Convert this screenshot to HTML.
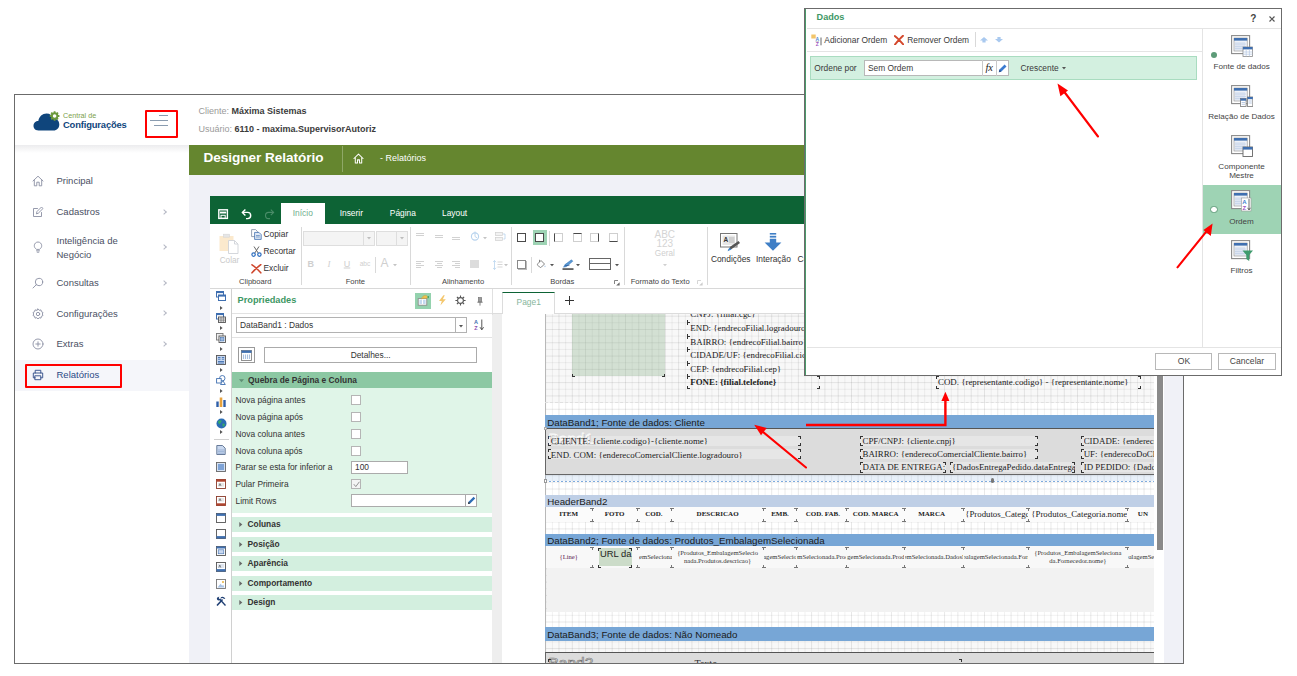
<!DOCTYPE html>
<html lang="pt-BR">
<head>
<meta charset="utf-8">
<title>Designer Relatório</title>
<style>
*{box-sizing:border-box;margin:0;padding:0}
html,body{width:1297px;height:676px;overflow:hidden;background:#fff}
body{position:relative;font-family:"Liberation Sans",sans-serif;color:#333;font-size:9px}
.abs{position:absolute}
.t{position:absolute;white-space:nowrap;line-height:1}
#frame{left:14px;top:94px;width:1170px;height:570px;border:1px solid #6b6b6b;background:#fff;overflow:hidden}
#side{left:0;top:50px;width:174px;height:520px;background:#fff}
#hdrshadow{left:0;top:50px;width:174px;height:8px;background:linear-gradient(#ececee,#fff)}
#content{left:174px;top:50px;width:994px;height:520px;background:#f0f1f7}
#gbar{left:174px;top:50px;width:994px;height:30px;background:#65862f}
.chev{position:absolute;width:4px;height:4px;border-top:1px solid #b5b8c4;border-right:1px solid #b5b8c4;transform:rotate(45deg)}
#des{left:195px;top:101px;width:954px;height:469px;background:#fff;overflow:hidden}
#dtop{left:0;top:0;width:954px;height:28px;background:#0d6335}
#ribbon{left:0;top:28px;width:954px;height:65px;background:#fff;border-bottom:1px solid #d8d8d8}
</style>
</head>
<body>
<div id="frame" class="abs">
  <div class="abs" id="side"></div>
  <div class="abs" id="hdrshadow"></div>
  <div class="abs" id="content"></div>
  <div class="abs" id="gbar"></div>
  <svg class="abs" style="left:17px;top:13px" width="30" height="24" viewBox="0 0 30 24">
<path d="M6.5 22.5 C2.5 22.5 1.5 19.5 1.5 17.8 C1.5 14.8 4 13 6.3 13.1 C7 8.5 10.5 5.5 14.5 5.5 C18 5.5 20.6 7.5 21.8 10.6 C25 10.6 27.3 13.2 27.3 16.5 C27.3 20 24.8 22.5 21.6 22.5 Z" fill="#0f457c"/>
<circle cx="22.6" cy="8" r="3.7" fill="#6d9a3c"/>
<g stroke="#6d9a3c" stroke-width="1.8"><path d="M22.6 3.2V12.8M17.8 8H27.4M19.2 4.6L26 11.4M26 4.6L19.2 11.4"/></g>
<circle cx="22.6" cy="8" r="1.8" fill="#fff"/>
</svg>
  <div class="t" style="left:48px;top:20.8px;transform:translateY(-50%);font-size:7.2px;color:#7ba04c">Central de</div>
  <div class="t" style="left:48px;top:29.8px;transform:translateY(-50%);font-size:9.4px;font-weight:bold;color:#0f457c;letter-spacing:-0.15px">Configurações</div>
  <div class="abs" style="left:130px;top:15px;width:33px;height:28px;border:2px solid #f00;border-radius:1px"></div>
  <div class="abs" style="left:144px;top:20px;width:9px;height:1px;background:#8a9cb0"></div>
  <div class="abs" style="left:135px;top:25px;width:18px;height:1px;background:#8a9cb0"></div>
  <div class="abs" style="left:139px;top:30px;width:14px;height:1px;background:#8a9cb0"></div>
  <div class="abs" style="left:0px;top:265px;width:174px;height:31px;background:#f5f6fa"></div>
  <div class="abs" style="left:10px;top:269px;width:97px;height:24px;border:2px solid #f00;border-radius:1px"></div>
  <div class="t" style="left:41.5px;top:86px;transform:translateY(-50%);font-size:9.5px;color:#4a4f63;line-height:13.5px">Principal</div>
  <div class="t" style="left:41.5px;top:117px;transform:translateY(-50%);font-size:9.5px;color:#4a4f63;line-height:13.5px">Cadastros</div>
  <div class="chev" style="top:114.5px;left:147px"></div>
  <div class="t" style="left:41.5px;top:152px;transform:translateY(-50%);font-size:9.5px;color:#4a4f63;line-height:13.5px">Inteligência de<br>Negócio</div>
  <div class="chev" style="top:149.5px;left:147px"></div>
  <div class="t" style="left:41.5px;top:188px;transform:translateY(-50%);font-size:9.5px;color:#4a4f63;line-height:13.5px">Consultas</div>
  <div class="chev" style="top:185.5px;left:147px"></div>
  <div class="t" style="left:41.5px;top:218.7px;transform:translateY(-50%);font-size:9.5px;color:#4a4f63;line-height:13.5px">Configurações</div>
  <div class="chev" style="top:216.2px;left:147px"></div>
  <div class="t" style="left:41.5px;top:249px;transform:translateY(-50%);font-size:9.5px;color:#4a4f63;line-height:13.5px">Extras</div>
  <div class="chev" style="top:246.5px;left:147px"></div>
  <div class="t" style="left:41.5px;top:280px;transform:translateY(-50%);font-size:9.5px;color:#2c4a86;line-height:13.5px">Relatórios</div>
  <svg class="abs" style="left:16.700000000000003px;top:80px" width="12" height="12" viewBox="0 0 12 12" fill="none" stroke="#8a8fa3" stroke-width="0.9" stroke-linecap="round" stroke-linejoin="round"><path d="M1 6L6 1.2L11 6M2.3 5V10.8H4.8V7.2H7.2V10.8H9.7V5"/></svg>
  <svg class="abs" style="left:16.700000000000003px;top:111px" width="12" height="12" viewBox="0 0 12 12" fill="none" stroke="#8a8fa3" stroke-width="0.9" stroke-linecap="round" stroke-linejoin="round"><path d="M9.5 6.5V10.5H1.5V2.5H5.5M4.5 7.5L5 5.5L9.5 1L11 2.5L6.5 7Z"/></svg>
  <svg class="abs" style="left:16.700000000000003px;top:145.5px" width="12" height="12" viewBox="0 0 12 12" fill="none" stroke="#8a8fa3" stroke-width="0.9" stroke-linecap="round" stroke-linejoin="round"><path d="M4.3 8.2C2.8 7.2 2.3 6 2.3 4.7C2.3 2.6 4 1 6 1S9.7 2.6 9.7 4.7C9.7 6 9.2 7.2 7.7 8.2ZM4.5 9.8H7.5M5.2 11.2H6.8"/></svg>
  <svg class="abs" style="left:16.700000000000003px;top:182px" width="12" height="12" viewBox="0 0 12 12" fill="none" stroke="#8a8fa3" stroke-width="0.9" stroke-linecap="round" stroke-linejoin="round"><circle cx="7" cy="5" r="3.7"/><path d="M4.3 7.7L1 11"/></svg>
  <svg class="abs" style="left:16.700000000000003px;top:212.7px" width="12" height="12" viewBox="0 0 12 12" fill="none" stroke="#8a8fa3" stroke-width="0.9" stroke-linecap="round" stroke-linejoin="round"><circle cx="6" cy="6" r="1.7"/><path d="M6 1L7.2 2.3L9 1.9L9.4 3.7L11 4.5L10.3 6L11 7.5L9.4 8.3L9 10.1L7.2 9.7L6 11L4.8 9.7L3 10.1L2.6 8.3L1 7.5L1.7 6L1 4.5L2.6 3.7L3 1.9L4.8 2.3Z"/></svg>
  <svg class="abs" style="left:16.700000000000003px;top:243px" width="12" height="12" viewBox="0 0 12 12" fill="none" stroke="#8a8fa3" stroke-width="0.9" stroke-linecap="round" stroke-linejoin="round"><circle cx="6" cy="6" r="5"/><path d="M6 3.8V8.2M3.8 6H8.2"/></svg>
  <svg class="abs" style="left:16.700000000000003px;top:274px" width="12" height="12" viewBox="0 0 12 12" fill="none" stroke="#2c4a86" stroke-width="0.9" stroke-linecap="round" stroke-linejoin="round"><path d="M3.2 4V1.3H8.8V4M3.2 8.8H1.3V4H10.7V8.8H8.8M3.2 6.8H8.8V10.7H3.2Z"/></svg>
  <div class="t" style="left:183.5px;top:16px;transform:translateY(-50%);font-size:9px;color:#9a9a9a">Cliente: <b style="color:#3b3b3b">Máxima Sistemas</b></div>
  <div class="t" style="left:183.5px;top:33.8px;transform:translateY(-50%);font-size:9px;color:#9a9a9a">Usuário: <b style="color:#3b3b3b">6110 - maxima.SupervisorAutoriz</b></div>
  <div class="t" style="left:188.5px;top:62.7px;transform:translateY(-50%);font-size:13.6px;font-weight:bold;color:#fff;letter-spacing:-0.05px">Designer Relatório</div>
  <div class="abs" style="left:327px;top:51px;width:1px;height:26px;background:#8fa867"></div>
  <svg class="abs" style="left:338px;top:58px" width="11" height="11" viewBox="0 0 12 12" fill="none" stroke="#fff" stroke-width="1.1" stroke-linejoin="round" stroke-linecap="round"><path d="M1 6L6 1.2L11 6M2.5 5V10.8H4.9V7.5H7.1V10.8H9.5V5"/></svg>
  <div class="t" style="left:365px;top:62.8px;transform:translateY(-50%);font-size:9px;color:#fff">- Relatórios</div>
  <div class="abs" id="des">
    <div class="abs" id="dtop"></div>
    <div class="abs" id="ribbon"></div>
    <svg class="abs" style="left:7.6px;top:12.6px" width="11" height="11" viewBox="0 0 11 11" ><rect x="0.8" y="0.8" width="8.6" height="8.6" fill="none" stroke="#fff" stroke-width="1.4"/><rect x="2" y="2.6" width="6.2" height="1.9" fill="#fff"/><rect x="3" y="6.3" width="4.2" height="3" fill="none" stroke="#fff" stroke-width="1"/></svg>
    <svg class="abs" style="left:30.5px;top:11.8px" width="12" height="12" viewBox="0 0 12 12" ><path d="M1.6 4.4H6.6A3.1 3.1 0 0 1 6.6 10.6H5" fill="none" stroke="#fff" stroke-width="1.4"/><path d="M4.4 1.4L1.4 4.4L4.4 7.4" fill="none" stroke="#fff" stroke-width="1.4"/></svg>
    <svg class="abs" style="left:52.8px;top:11.8px" width="12" height="12" viewBox="0 0 12 12" ><path d="M10.4 4.4H5.6A3.1 3.1 0 0 0 5.6 10.6H7" fill="none" stroke="#4a8c68" stroke-width="1.1"/><path d="M7.8 1.6L10.6 4.4L7.8 7.2" fill="none" stroke="#4a8c68" stroke-width="1.1"/></svg>
    <div class="abs" style="left:70.5px;top:7px;width:44.5px;height:21px;background:#fff"></div>
    <div class="t" style="left:92.8px;top:16.8px;transform:translate(-50%,-50%);font-size:8.4px;color:#6fae8d">Início</div>
    <div class="t" style="left:129.7px;top:16.8px;transform:translateY(-50%);font-size:8.4px;color:#fff">Inserir</div>
    <div class="t" style="left:179.8px;top:16.8px;transform:translateY(-50%);font-size:8.4px;color:#fff">Página</div>
    <div class="t" style="left:232px;top:16.8px;transform:translateY(-50%);font-size:8.4px;color:#fff">Layout</div>
    <div class="abs" style="left:90.6px;top:31px;width:1px;height:58px;background:#d9d9d9"></div>
    <div class="abs" style="left:200px;top:31px;width:1px;height:58px;background:#d9d9d9"></div>
    <div class="abs" style="left:301.4px;top:31px;width:1px;height:58px;background:#d9d9d9"></div>
    <div class="abs" style="left:414px;top:31px;width:1px;height:58px;background:#d9d9d9"></div>
    <div class="abs" style="left:497px;top:31px;width:1px;height:58px;background:#d9d9d9"></div>
    <div class="t" style="left:45.3px;top:86px;transform:translate(-50%,-50%);font-size:7.6px;color:#444">Clipboard</div>
    <div class="t" style="left:145.4px;top:86px;transform:translate(-50%,-50%);font-size:7.6px;color:#444">Fonte</div>
    <div class="t" style="left:253px;top:86px;transform:translate(-50%,-50%);font-size:7.6px;color:#444">Alinhamento</div>
    <div class="t" style="left:352.2px;top:86px;transform:translate(-50%,-50%);font-size:7.6px;color:#444">Bordas</div>
    <div class="t" style="left:450.2px;top:86px;transform:translate(-50%,-50%);font-size:7.6px;color:#444">Formato do Texto</div>
    <svg class="abs" style="left:403.5px;top:83.5px" width="6" height="6" viewBox="0 0 6 6" ><path d="M0.5 4V0.5H4" fill="none" stroke="#666" stroke-width="0.8"/><path d="M2.2 5.6H5.6V2.2Z" fill="#666"/></svg>
    <svg class="abs" style="left:487.4px;top:83.5px" width="6" height="6" viewBox="0 0 6 6" ><path d="M0.5 4V0.5H4" fill="none" stroke="#ccc" stroke-width="0.8"/><path d="M2.2 5.6H5.6V2.2Z" fill="#ccc"/></svg>
    <svg class="abs" style="left:9px;top:36.5px" width="20" height="21" viewBox="0 0 20 21" ><rect x="0.5" y="3" width="14" height="15" fill="#fbe9cd"/><rect x="4.5" y="1.2" width="6" height="3" fill="#e6e6e6" stroke="#d5d5d5" stroke-width="0.6"/><path d="M9.5 7.5H15.5L19 11V20.5H9.5Z" fill="#fff" stroke="#cfd3d8" stroke-width="0.9"/><path d="M15.5 7.5V11H19" fill="none" stroke="#cfd3d8" stroke-width="0.9"/></svg>
    <div class="t" style="left:9.7px;top:64.8px;transform:translateY(-50%);font-size:8.2px;color:#c9c9c9">Colar</div>
    <svg class="abs" style="left:40.5px;top:32.5px" width="11" height="11" viewBox="0 0 11 11" ><path d="M0.6 0.6H4.6L6.4 2.4V7.6H0.6Z" fill="#fff" stroke="#7d8aa0" stroke-width="0.8"/><path d="M3.6 3.4H8L10.2 5.6V10.4H3.6Z" fill="#dfe8f5" stroke="#3f6fb0" stroke-width="0.8"/><path d="M5 6.5H8.8M5 8H8.8" stroke="#3f6fb0" stroke-width="0.6"/></svg>
    <div class="t" style="left:53.5px;top:37.8px;transform:translateY(-50%);font-size:8.4px;color:#333">Copiar</div>
    <svg class="abs" style="left:40.5px;top:49.5px" width="11" height="11" viewBox="0 0 11 11" ><path d="M3 0.5L7.2 7M8 0.5L3.8 7" stroke="#666" stroke-width="1" fill="none"/><circle cx="2.6" cy="8.6" r="1.7" fill="none" stroke="#2f6fc0" stroke-width="1.2"/><circle cx="8.4" cy="8.6" r="1.7" fill="none" stroke="#2f6fc0" stroke-width="1.2"/></svg>
    <div class="t" style="left:53.5px;top:55px;transform:translateY(-50%);font-size:8.4px;color:#333">Recortar</div>
    <svg class="abs" style="left:40.5px;top:67.5px" width="11" height="10" viewBox="0 0 11 10" ><path d="M1 0.8C4 2.8 7 5.6 9.8 8.8M9.8 0.6C6.5 3 3.8 5.8 1 8.8" stroke="#cf472d" stroke-width="1.6" fill="none" stroke-linecap="round"/></svg>
    <div class="t" style="left:53.5px;top:72.2px;transform:translateY(-50%);font-size:8.4px;color:#333">Excluir</div>
    <div class="abs" style="left:93px;top:34.5px;width:71.5px;height:15px;background:#f4f4f4;border:1px solid #dedede"></div>
    <div class="abs" style="left:152.5px;top:34.5px;width:1px;height:15px;background:#dedede"></div>
    <div class="abs" style="left:166.2px;top:34.5px;width:31.4px;height:15px;background:#f4f4f4;border:1px solid #dedede"></div>
    <div class="abs" style="left:186px;top:34.5px;width:1px;height:15px;background:#dedede"></div>
    <svg class="abs" style="left:156.5px;top:41.3px" width="4" height="3" viewBox="0 0 4 3" ><path d="M0 0H4L2 2.4Z" fill="#bdbdbd"/></svg>
    <svg class="abs" style="left:189.8px;top:41.3px" width="4" height="3" viewBox="0 0 4 3" ><path d="M0 0H4L2 2.4Z" fill="#bdbdbd"/></svg>
    <div class="t" style="left:100.8px;top:67.7px;transform:translate(-50%,-50%);font-size:9px;font-weight:bold;color:#cfcfcf">B</div>
    <div class="t" style="left:119px;top:67.7px;transform:translate(-50%,-50%);font-size:9px;font-style:italic;font-family:'Liberation Serif',serif;color:#cfcfcf">I</div>
    <div class="t" style="left:137px;top:67.7px;transform:translate(-50%,-50%);font-size:9px;text-decoration:underline;color:#cfcfcf">U</div>
    <div class="t" style="left:155px;top:68px;transform:translate(-50%,-50%);font-size:6.6px;color:#cfcfcf">abc</div>
    <div class="abs" style="left:164.6px;top:60.5px;width:1px;height:16px;background:#d9d9d9"></div>
    <div class="t" style="left:174.5px;top:66.8px;transform:translate(-50%,-50%);font-size:12px;color:#cfcfcf">A</div>
    <svg class="abs" style="left:183px;top:68px" width="4" height="3" viewBox="0 0 4 3" ><path d="M0 0H4L2 2.2Z" fill="#c4c4c4"/></svg>
    <div class="abs" style="left:206.4px;top:36.5px;width:8px;height:1px;background:#d2d2d2"></div>
    <div class="abs" style="left:206.4px;top:38.7px;width:8px;height:1px;background:#d2d2d2"></div>
    <div class="abs" style="left:225.0px;top:38.5px;width:8px;height:1px;background:#d2d2d2"></div>
    <div class="abs" style="left:225.0px;top:40.7px;width:8px;height:1px;background:#d2d2d2"></div>
    <div class="abs" style="left:242.0px;top:40.5px;width:8px;height:1px;background:#d2d2d2"></div>
    <div class="abs" style="left:242.0px;top:42.7px;width:8px;height:1px;background:#d2d2d2"></div>
    <svg class="abs" style="left:259.5px;top:35px" width="10" height="10" viewBox="0 0 10 10" ><circle cx="5" cy="5.5" r="3.6" fill="none" stroke="#b7d3ee" stroke-width="1.1"/><path d="M5 0.5V5.5L7 6.8" fill="none" stroke="#b7d3ee" stroke-width="0.9"/></svg>
    <svg class="abs" style="left:273px;top:41px" width="4" height="3" viewBox="0 0 4 3" ><path d="M0 0H4L2 2.2Z" fill="#c4c4c4"/></svg>
    <svg class="abs" style="left:284.5px;top:36px" width="11" height="10" viewBox="0 0 11 10" ><rect x="0.5" y="0.5" width="7" height="3" fill="#f2f2f2" stroke="#d0d0d0" stroke-width="0.7"/><rect x="0.5" y="5.5" width="7" height="3" fill="#f2f2f2" stroke="#d0d0d0" stroke-width="0.7"/><path d="M8 2H10V7H8.4" fill="none" stroke="#b7d3ee" stroke-width="0.8"/></svg>
    <div class="abs" style="left:206.4px;top:64.5px;width:8px;height:1px;background:#d2d2d2"></div>
    <div class="abs" style="left:206.4px;top:66.7px;width:5px;height:1px;background:#d2d2d2"></div>
    <div class="abs" style="left:206.4px;top:68.9px;width:8px;height:1px;background:#d2d2d2"></div>
    <div class="abs" style="left:206.4px;top:71.1px;width:5px;height:1px;background:#d2d2d2"></div>
    <div class="abs" style="left:225.0px;top:64.5px;width:8px;height:1px;background:#d2d2d2"></div>
    <div class="abs" style="left:226.5px;top:66.7px;width:5px;height:1px;background:#d2d2d2"></div>
    <div class="abs" style="left:225.0px;top:68.9px;width:8px;height:1px;background:#d2d2d2"></div>
    <div class="abs" style="left:226.5px;top:71.1px;width:5px;height:1px;background:#d2d2d2"></div>
    <div class="abs" style="left:242.0px;top:64.5px;width:8px;height:1px;background:#d2d2d2"></div>
    <div class="abs" style="left:245.0px;top:66.7px;width:5px;height:1px;background:#d2d2d2"></div>
    <div class="abs" style="left:242.0px;top:68.9px;width:8px;height:1px;background:#d2d2d2"></div>
    <div class="abs" style="left:245.0px;top:71.1px;width:5px;height:1px;background:#d2d2d2"></div>
    <div class="abs" style="left:260px;top:64.3px;width:9px;height:7.5px;background:#dcdcdc"></div>
    <svg class="abs" style="left:282.5px;top:63.5px" width="10" height="10" viewBox="0 0 10 10" ><path d="M1.5 0.5V9.5M0 2.2L1.5 0.5L3 2.2M0 7.8L1.5 9.5L3 7.8" fill="none" stroke="#b7d3ee" stroke-width="0.8"/><path d="M4.5 2H9.5M4.5 4.5H9.5M4.5 7H9.5" stroke="#d2d2d2" stroke-width="0.9"/></svg>
    <svg class="abs" style="left:293.5px;top:68px" width="4" height="3" viewBox="0 0 4 3" ><path d="M0 0H4L2 2.2Z" fill="#c4c4c4"/></svg>
    <div class="abs" style="left:307.3px;top:37.3px;width:9px;height:9px;border:1.5px solid #4a4a4a"></div>
    <div class="abs" style="left:322.6px;top:34.3px;width:14px;height:15px;background:#9ed3b4"></div>
    <div class="abs" style="left:325.1px;top:37.3px;width:9px;height:9px;border:1.5px solid #4a4a4a;background:#fff"></div>
    <div class="abs" style="left:339px;top:34.5px;width:1px;height:15px;background:#d9d9d9"></div>
    <div class="abs" style="left:344.2px;top:37.3px;width:9px;height:9px;border:1px solid #cfcfcf;border-left:1.5px solid #4a4a4a"></div>
    <div class="abs" style="left:362.5px;top:37.3px;width:9px;height:9px;border:1px solid #cfcfcf;border-top:1.5px solid #4a4a4a"></div>
    <div class="abs" style="left:380.3px;top:37.3px;width:9px;height:9px;border:1px solid #cfcfcf;border-right:1.5px solid #4a4a4a"></div>
    <div class="abs" style="left:398.9px;top:37.3px;width:9px;height:9px;border:1px solid #cfcfcf;border-bottom:1.5px solid #4a4a4a"></div>
    <div class="abs" style="left:307.3px;top:63.8px;width:9px;height:9px;border:1px solid #8a8a8a;box-shadow:1px 1px 0 #bbb"></div>
    <div class="abs" style="left:320.7px;top:60.5px;width:1px;height:16px;background:#d9d9d9"></div>
    <svg class="abs" style="left:325.5px;top:63px" width="10" height="10" viewBox="0 0 10 10" ><path d="M2 4.5L5 1.5L8.5 5L5.5 8Q4.5 9 3.5 8L1.8 6.3Q1 5.4 2 4.5Z" fill="#fff" stroke="#666" stroke-width="0.8"/><path d="M3.5 3V0.8" stroke="#666" stroke-width="0.8"/><path d="M9 6.2Q9.9 7.6 9 8.2Q8.1 7.6 9 6.2Z" fill="#7aa7d8"/></svg>
    <svg class="abs" style="left:340px;top:68px" width="4" height="3" viewBox="0 0 4 3" ><path d="M0 0H4L2 2.2Z" fill="#555"/></svg>
    <svg class="abs" style="left:352px;top:62.5px" width="12" height="11" viewBox="0 0 12 11" ><path d="M1.5 8.2L3 5.6L9.5 0.8L10.8 2.2L4.5 7.6Z" fill="#5b9bd5" stroke="#2e6db4" stroke-width="0.5"/><path d="M3 6.8L7.5 6.2" stroke="#1f4e8c" stroke-width="0.7"/><rect x="0.5" y="9.4" width="11" height="1.3" fill="#222"/></svg>
    <svg class="abs" style="left:366.3px;top:68px" width="4" height="3" viewBox="0 0 4 3" ><path d="M0 0H4L2 2.2Z" fill="#555"/></svg>
    <div class="abs" style="left:378.5px;top:62.2px;width:22.5px;height:11.4px;border:1px solid #666;background:#fff"></div>
    <div class="abs" style="left:378.5px;top:67.4px;width:22.5px;height:1px;background:#666"></div>
    <svg class="abs" style="left:404.5px;top:68px" width="4" height="3" viewBox="0 0 4 3" ><path d="M0 0H4L2 2.2Z" fill="#555"/></svg>
    <div class="t" style="left:454.8px;top:38.7px;transform:translate(-50%,-50%);font-size:10px;color:#d4d4d4">ABC</div>
    <div class="t" style="left:454.8px;top:48.3px;transform:translate(-50%,-50%);font-size:10px;color:#d4d4d4">123</div>
    <div class="t" style="left:454.8px;top:57.8px;transform:translate(-50%,-50%);font-size:8.2px;color:#cfcfcf">Geral</div>
    <svg class="abs" style="left:453px;top:68px" width="4" height="3" viewBox="0 0 4 3" ><path d="M0 0H4L2 2.2Z" fill="#d0d0d0"/></svg>
    <svg class="abs" style="left:510px;top:36.5px" width="21" height="19" viewBox="0 0 21 19" ><rect x="0.5" y="0.5" width="16.5" height="13.5" fill="#fff" stroke="#777" stroke-width="1"/><rect x="2.5" y="2.5" width="12.5" height="9.5" fill="#e7e7e7"/><rect x="9" y="4" width="5.5" height="6" fill="#cfcfcf"/><text x="3.4" y="8.8" font-family="Liberation Sans, sans-serif" font-size="6.5" font-weight="bold" fill="#333">A</text><path d="M8 17.5L10.5 13.5L18.5 8L20 10L12 15.8Z" fill="#555"/><path d="M7.5 18.2L9.3 14.8L11.6 16.6Z" fill="#3f86d0"/></svg>
    <div class="t" style="left:520.7px;top:63.4px;transform:translate(-50%,-50%);font-size:8.4px;color:#333">Condições</div>
    <svg class="abs" style="left:554px;top:36.8px" width="18" height="18" viewBox="0 0 18 18" ><rect x="5.8" y="0" width="6.4" height="1.6" fill="#3f7fc6"/><rect x="5.8" y="2.8" width="6.4" height="1.8" fill="#3f7fc6"/><path d="M5.8 5.8H12.2V9.6H17.4L9 17.8L0.6 9.6H5.8Z" fill="#3f7fc6"/></svg>
    <div class="t" style="left:563.4px;top:63.4px;transform:translate(-50%,-50%);font-size:8.4px;color:#333">Interação</div>
    <div class="t" style="left:587.6px;top:63.4px;transform:translateY(-50%);font-size:8.4px;color:#333">Copiar Estilo</div>
    <div class="abs" style="left:21px;top:92.5px;width:1px;height:375px;background:#d0d0d0"></div>
    <svg class="abs" style="left:6.0px;top:95.2px" width="10" height="10" viewBox="0 0 10 10" ><rect x="0.5" y="0.5" width="7" height="5.5" fill="#fff" stroke="#3f6fb0" stroke-width="1"/><rect x="0.5" y="0.5" width="7" height="1.6" fill="#3f6fb0"/><rect x="2.5" y="4" width="7" height="5.5" fill="#fff" stroke="#3f6fb0" stroke-width="1"/><rect x="2.5" y="4" width="7" height="1.6" fill="#3f6fb0"/></svg>
    <svg class="abs" style="left:6.0px;top:116.5px" width="10" height="10" viewBox="0 0 10 10" ><rect x="0.5" y="0.5" width="7" height="5.5" fill="#fff" stroke="#3f6fb0" stroke-width="1"/><rect x="0.5" y="0.5" width="7" height="1.6" fill="#3f6fb0"/><rect x="2.5" y="4" width="7" height="5.5" fill="#fff" stroke="#555" stroke-width="0.9"/><path d="M2.5 6H9.5M2.5 7.8H9.5M5 4V9.5M7.3 4V9.5" stroke="#555" stroke-width="0.6"/></svg>
    <svg class="abs" style="left:6.0px;top:137.0px" width="10" height="10" viewBox="0 0 10 10" ><rect x="0.5" y="0.5" width="6.5" height="6.5" fill="#eee" stroke="#777" stroke-width="0.9"/><rect x="3" y="3" width="6.5" height="6.5" fill="#fff" stroke="#555" stroke-width="0.9"/><rect x="4.5" y="4.5" width="3.5" height="3.5" fill="#9db8dd" stroke="#3f6fb0" stroke-width="0.6"/></svg>
    <svg class="abs" style="left:6.0px;top:158.5px" width="10" height="10" viewBox="0 0 10 10" ><rect x="0.5" y="0.5" width="9" height="9" fill="#c9d8ef" stroke="#555" stroke-width="0.9"/><path d="M2 2.5H4.5M5.8 2.5H8.2M2 4.2H4.5M5.8 4.2H8.2M2 6.5H8M2 8H8" stroke="#3f6fb0" stroke-width="0.9"/></svg>
    <svg class="abs" style="left:6.0px;top:179.0px" width="10" height="10" viewBox="0 0 10 10" ><circle cx="6.3" cy="3.2" r="2.7" fill="#fff" stroke="#3f6fb0" stroke-width="0.9"/><rect x="0.6" y="3.6" width="4.6" height="4.4" fill="#fff" stroke="#3f6fb0" stroke-width="0.9"/><path d="M4.5 9.5L6.8 5.6L9.3 9.5Z" fill="#fff" stroke="#3f6fb0" stroke-width="0.9"/></svg>
    <svg class="abs" style="left:6.0px;top:200.6px" width="10" height="10" viewBox="0 0 10 10" ><rect x="0.3" y="4.5" width="2.4" height="5.5" fill="#2f5fa8"/><rect x="3.7" y="0.5" width="2.6" height="9.5" fill="#e8a33d"/><rect x="7.3" y="3" width="2.4" height="7" fill="#2f5fa8"/></svg>
    <svg class="abs" style="left:5.5px;top:221.5px" width="11" height="11" viewBox="0 0 11 11" ><circle cx="5.5" cy="5.5" r="5" fill="#2a6db5"/><path d="M2 3.2Q4 1.6 5.6 2.6Q6 4 4.6 4.8Q4.4 6.4 3.2 6.2Q2 5 2 3.2ZM6.4 5.6Q8 5 9 6.2Q8.6 8.4 7 9Q6.2 7.4 6.4 5.6Z" fill="#35a86b"/></svg>
    <svg class="abs" style="left:9.8px;top:109.6px" width="3" height="4" viewBox="0 0 3 4" ><path d="M0 0L2.6 2L0 4Z" fill="#555"/></svg>
    <svg class="abs" style="left:9.8px;top:129.6px" width="3" height="4" viewBox="0 0 3 4" ><path d="M0 0L2.6 2L0 4Z" fill="#555"/></svg>
    <svg class="abs" style="left:9.8px;top:151px" width="3" height="4" viewBox="0 0 3 4" ><path d="M0 0L2.6 2L0 4Z" fill="#555"/></svg>
    <svg class="abs" style="left:9.8px;top:172px" width="3" height="4" viewBox="0 0 3 4" ><path d="M0 0L2.6 2L0 4Z" fill="#555"/></svg>
    <svg class="abs" style="left:9.8px;top:193px" width="3" height="4" viewBox="0 0 3 4" ><path d="M0 0L2.6 2L0 4Z" fill="#555"/></svg>
    <svg class="abs" style="left:9.8px;top:213.5px" width="3" height="4" viewBox="0 0 3 4" ><path d="M0 0L2.6 2L0 4Z" fill="#555"/></svg>
    <svg class="abs" style="left:9.8px;top:234px" width="3" height="4" viewBox="0 0 3 4" ><path d="M0 0L2.6 2L0 4Z" fill="#555"/></svg>
    <div class="abs" style="left:3.5px;top:243.4px;width:15px;height:1px;background:#d0d0d0"></div>
    <svg class="abs" style="left:6.0px;top:248.5px" width="10" height="10" viewBox="0 0 10 10" ><path d="M0.8 0.5H6.5L9.2 3.2V9.5H0.8Z" fill="#c9d8ef" stroke="#5a6f8f" stroke-width="0.9"/><path d="M2 5H8M2 6.6H8M2 8.2H8" stroke="#8aa5cc" stroke-width="0.7"/></svg>
    <svg class="abs" style="left:6.0px;top:266.4px" width="10" height="10" viewBox="0 0 10 10" ><rect x="0.5" y="0.5" width="9" height="9" fill="#d6e2f3" stroke="#666" stroke-width="0.9"/><rect x="2" y="2" width="6" height="6" fill="#7ea3d6"/></svg>
    <svg class="abs" style="left:6.0px;top:283.0px" width="10" height="10" viewBox="0 0 10 10" ><rect x="0.5" y="0.5" width="9" height="9" fill="#fff" stroke="#8a3b2a" stroke-width="0.9"/><rect x="0.5" y="0.5" width="9" height="2.2" fill="#b0452f"/><rect x="2" y="4" width="6" height="3.6" fill="#e6e6e6"/><path d="M3 7L4 4.6L5 7" stroke="#444" stroke-width="0.6" fill="none"/></svg>
    <svg class="abs" style="left:6.0px;top:299.5px" width="10" height="10" viewBox="0 0 10 10" ><rect x="0.5" y="0.5" width="9" height="9" fill="#fff" stroke="#8a3b2a" stroke-width="0.9"/><rect x="0.5" y="7.3" width="9" height="2.2" fill="#b0452f"/><rect x="2" y="2" width="6" height="3.6" fill="#e6e6e6"/><path d="M3 5L4 2.6L5 5" stroke="#444" stroke-width="0.6" fill="none"/></svg>
    <svg class="abs" style="left:6.0px;top:316.5px" width="10" height="10" viewBox="0 0 10 10" ><rect x="0.5" y="0.5" width="9" height="9" fill="#fff" stroke="#555" stroke-width="0.9"/><rect x="0.5" y="0.5" width="9" height="2.4" fill="#3f6fb0"/></svg>
    <svg class="abs" style="left:6.0px;top:333.0px" width="10" height="10" viewBox="0 0 10 10" ><rect x="0.5" y="0.5" width="9" height="9" fill="#fff" stroke="#555" stroke-width="0.9"/><rect x="0.5" y="7.1" width="9" height="2.4" fill="#3f6fb0"/></svg>
    <svg class="abs" style="left:6.0px;top:349.8px" width="10" height="10" viewBox="0 0 10 10" ><rect x="0.5" y="0.5" width="9" height="9" fill="#fff" stroke="#555" stroke-width="0.9"/><rect x="0.5" y="0.5" width="9" height="2" fill="#3f6fb0"/><rect x="2.2" y="3.8" width="5.6" height="4" fill="#c9d8ef" stroke="#3f6fb0" stroke-width="0.6"/></svg>
    <svg class="abs" style="left:6.0px;top:366.0px" width="10" height="10" viewBox="0 0 10 10" ><rect x="0.5" y="0.5" width="9" height="9" fill="#fff" stroke="#555" stroke-width="0.9"/><rect x="1.8" y="2" width="6.4" height="4" fill="#dfe5ee"/><rect x="0.5" y="7.1" width="9" height="2.4" fill="#3f6fb0"/><path d="M2.8 5.6L3.8 3L4.8 5.6" stroke="#444" stroke-width="0.6" fill="none"/></svg>
    <svg class="abs" style="left:6.0px;top:382.7px" width="10" height="10" viewBox="0 0 10 10" ><rect x="0.5" y="0.5" width="9" height="9" fill="#fff" stroke="#777" stroke-width="0.9"/><path d="M1.5 8.5L4.5 4.8L6.2 6.8L7.2 5.8L8.5 8.5Z" fill="#a9c4e6"/><circle cx="7" cy="3" r="1" fill="#e8b33d"/></svg>
    <svg class="abs" style="left:6.0px;top:399.7px" width="10" height="10" viewBox="0 0 10 10" ><path d="M1 9.5L6.5 3.5" stroke="#1f3f73" stroke-width="1.6"/><path d="M9.5 9.5L3.8 3.2" stroke="#1f3f73" stroke-width="1.3"/><path d="M4.8 1.2Q7.4 0 9.4 2.4L8 3Q6.8 1.6 4.8 2.4Z" fill="#1f3f73"/><path d="M0.8 2.6Q1.2 0.6 3.4 0.8L2.6 2L3.6 3L4.8 2.4Q4.8 4.6 2.6 4.6Q1 4.4 0.8 2.6Z" fill="#1f3f73"/></svg>
    <div class="abs" style="left:281.5px;top:118px;width:10.5px;height:350px;background:#eeeeee"></div>
    <div class="t" style="left:27.6px;top:104.7px;transform:translateY(-50%);font-size:9.2px;font-weight:bold;color:#3d9764">Propriedades</div>
    <div class="abs" style="left:205px;top:97.1px;width:15.6px;height:15.7px;background:#94d2ae"></div>
    <svg class="abs" style="left:206.5px;top:98px" width="13" height="13" viewBox="0 0 13 13" ><rect x="1.2" y="4.6" width="8.6" height="6.6" fill="#fff" stroke="#8a8a8a" stroke-width="0.9"/><rect x="2.4" y="5.8" width="2.6" height="4.2" fill="#c5d9f0"/><rect x="6" y="5.8" width="2.6" height="4.2" fill="#c5d9f0"/><path d="M4.6 5C5 2.6 6.6 1.2 8.6 1.4C10.4 1.6 11 3 10.6 3.8C9.4 4.8 7.4 4.6 6.2 4.2Z" fill="#efc050" stroke="#c79a2e" stroke-width="0.4"/><rect x="10.6" y="2" width="1.4" height="2.2" fill="#4aa56a"/></svg>
    <svg class="abs" style="left:227.8px;top:99px" width="9" height="11" viewBox="0 0 9 11" ><path d="M5.4 0.2L1 6H3.8L2.4 10.6L7.8 4.2H4.8L6.8 0.2Z" fill="#f4c76e"/></svg>
    <svg class="abs" style="left:244.8px;top:99px" width="11" height="11" viewBox="0 0 11 11" ><circle cx="5.5" cy="5.5" r="2.9" fill="none" stroke="#555" stroke-width="1.1"/><path d="M5.5 0.4V2M5.5 9V10.6M0.4 5.5H2M9 5.5H10.6M1.9 1.9L3 3M8 8L9.1 9.1M1.9 9.1L3 8M8 3L9.1 1.9" stroke="#555" stroke-width="1.1"/></svg>
    <svg class="abs" style="left:267px;top:100.5px" width="6" height="9" viewBox="0 0 6 9" ><rect x="1.4" y="0.6" width="3.2" height="4.4" fill="#9a9a9a" stroke="#777" stroke-width="0.7"/><path d="M0.3 5.2H5.7M3 5.2V8.6" stroke="#777" stroke-width="0.9"/></svg>
    <div class="abs" style="left:281.5px;top:92.5px;width:1px;height:26px;background:#e0e0e0"></div>
    <div class="abs" style="left:22px;top:117px;width:259.5px;height:1px;background:#e2e2e2"></div>
    <div class="abs" style="left:26px;top:121.4px;width:231.2px;height:15.2px;border:1px solid #b2b2b2;background:#fff"></div>
    <div class="abs" style="left:245.2px;top:121.4px;width:1px;height:15.2px;background:#b2b2b2"></div>
    <div class="t" style="left:30px;top:129.4px;transform:translateY(-50%);font-size:8.4px;color:#333">DataBand1 : Dados</div>
    <svg class="abs" style="left:249.3px;top:128.5px" width="4" height="3" viewBox="0 0 4 3" ><path d="M0 0H4L2 2.4Z" fill="#555"/></svg>
    <svg class="abs" style="left:264px;top:123px" width="11" height="12" viewBox="0 0 11 12" ><text x="0" y="5" font-family="Liberation Sans, sans-serif" font-size="5.5" font-weight="bold" fill="#3f6fb0">A</text><text x="0.2" y="11" font-family="Liberation Sans, sans-serif" font-size="5.5" font-weight="bold" fill="#8a4fb0">Z</text><path d="M7.8 0.5V10.5M6 8.2L7.8 10.8L9.6 8.2" stroke="#444" stroke-width="0.9" fill="none"/></svg>
    <div class="abs" style="left:22px;top:140.8px;width:259.5px;height:1px;background:#e2e2e2"></div>
    <div class="abs" style="left:27.6px;top:150.6px;width:17.8px;height:16.8px;border:1px solid #9a9a9a;background:#fff"></div>
    <svg class="abs" style="left:31px;top:153.5px" width="11" height="11" viewBox="0 0 11 11" ><rect x="0.5" y="0.5" width="10" height="10" fill="#fff" stroke="#777" stroke-width="0.8"/><rect x="0.5" y="0.5" width="10" height="2.4" fill="#3f6fb0"/><path d="M2.5 4.5V9M4.5 4.5V9M6.5 4.5V9M8.5 4.5V9" stroke="#a9c0e0" stroke-width="1.1"/></svg>
    <div class="abs" style="left:54.2px;top:150.6px;width:213px;height:16.8px;border:1px solid #ababab;background:#fff"></div>
    <div class="t" style="left:160.7px;top:159.2px;transform:translate(-50%,-50%);font-size:8.4px;color:#333">Detalhes...</div>
    <div class="abs" style="left:22px;top:176.3px;width:259.5px;height:15.7px;background:#8cc8a3"></div>
    <svg class="abs" style="left:28.5px;top:183px" width="5" height="4" viewBox="0 0 5 4" ><path d="M0 0.3H5L2.5 3.3Z" fill="#5f8f74"/></svg>
    <div class="t" style="left:38px;top:184.3px;transform:translateY(-50%);font-size:8.4px;font-weight:bold;color:#333">Quebra de Página e Coluna</div>
    <div class="abs" style="left:22px;top:192px;width:259.5px;height:124.8px;background:#e0f5e8"></div>
    <div class="t" style="left:25.5px;top:204.4px;transform:translateY(-50%);font-size:8.4px;color:#333">Nova página antes</div>
    <div class="t" style="left:25.5px;top:221.3px;transform:translateY(-50%);font-size:8.4px;color:#333">Nova página após</div>
    <div class="t" style="left:25.5px;top:238px;transform:translateY(-50%);font-size:8.4px;color:#333">Nova coluna antes</div>
    <div class="t" style="left:25.5px;top:254.7px;transform:translateY(-50%);font-size:8.4px;color:#333">Nova coluna após</div>
    <div class="t" style="left:25.5px;top:271.3px;transform:translateY(-50%);font-size:8.4px;color:#333">Parar se esta for inferior a</div>
    <div class="t" style="left:25.5px;top:288.3px;transform:translateY(-50%);font-size:8.4px;color:#333">Pular Primeira</div>
    <div class="t" style="left:25.5px;top:304.9px;transform:translateY(-50%);font-size:8.4px;color:#333">Limit Rows</div>
    <div class="abs" style="left:141.2px;top:199.4px;width:10px;height:10px;border:1px solid #b5b5b5;background:#fff"></div>
    <div class="abs" style="left:141.2px;top:216.3px;width:10px;height:10px;border:1px solid #b5b5b5;background:#fff"></div>
    <div class="abs" style="left:141.2px;top:233px;width:10px;height:10px;border:1px solid #b5b5b5;background:#fff"></div>
    <div class="abs" style="left:141.2px;top:249.7px;width:10px;height:10px;border:1px solid #b5b5b5;background:#fff"></div>
    <div class="abs" style="left:141.2px;top:264.5px;width:56.5px;height:13.4px;border:1px solid #ababab;background:#fff"></div>
    <div class="t" style="left:145px;top:271.4px;transform:translateY(-50%);font-size:8.4px;color:#333">100</div>
    <div class="abs" style="left:141.2px;top:283.3px;width:10px;height:10px;border:1px solid #b5b5b5;background:#f4f4f4"></div>
    <svg class="abs" style="left:142.7px;top:285px" width="7" height="7" viewBox="0 0 7 7" ><path d="M0.8 3.2L2.8 5.6L6.4 0.8" fill="none" stroke="#888" stroke-width="0.9"/></svg>
    <div class="abs" style="left:141px;top:298.2px;width:126.3px;height:13.2px;border:1px solid #ababab;background:#fff"></div>
    <div class="abs" style="left:254.5px;top:298.2px;width:1px;height:13.2px;background:#ababab"></div>
    <svg class="abs" style="left:256.5px;top:300px" width="9" height="9" viewBox="0 0 9 9" ><path d="M1 8L1.6 5.8L6.6 0.8L8.2 2.4L3.2 7.4Z" fill="#2e6db4"/><path d="M1 8L1.6 5.8L3.2 7.4Z" fill="#333"/></svg>
    <div class="abs" style="left:22px;top:320.9px;width:259.5px;height:15.2px;background:#d3efdf"></div>
    <svg class="abs" style="left:28.5px;top:326.1px" width="4" height="5" viewBox="0 0 4 5" ><path d="M0.3 0L3.3 2.5L0.3 5Z" fill="#666"/></svg>
    <div class="t" style="left:37.5px;top:328.1px;transform:translateY(-50%);font-size:8.4px;font-weight:bold;color:#333">Colunas</div>
    <div class="abs" style="left:22px;top:340.6px;width:259.5px;height:15.2px;background:#d3efdf"></div>
    <svg class="abs" style="left:28.5px;top:345.8px" width="4" height="5" viewBox="0 0 4 5" ><path d="M0.3 0L3.3 2.5L0.3 5Z" fill="#666"/></svg>
    <div class="t" style="left:37.5px;top:347.8px;transform:translateY(-50%);font-size:8.4px;font-weight:bold;color:#333">Posição</div>
    <div class="abs" style="left:22px;top:360.1px;width:259.5px;height:15.2px;background:#d3efdf"></div>
    <svg class="abs" style="left:28.5px;top:365.3px" width="4" height="5" viewBox="0 0 4 5" ><path d="M0.3 0L3.3 2.5L0.3 5Z" fill="#666"/></svg>
    <div class="t" style="left:37.5px;top:367.3px;transform:translateY(-50%);font-size:8.4px;font-weight:bold;color:#333">Aparência</div>
    <div class="abs" style="left:22px;top:379.5px;width:259.5px;height:15.2px;background:#d3efdf"></div>
    <svg class="abs" style="left:28.5px;top:384.7px" width="4" height="5" viewBox="0 0 4 5" ><path d="M0.3 0L3.3 2.5L0.3 5Z" fill="#666"/></svg>
    <div class="t" style="left:37.5px;top:386.7px;transform:translateY(-50%);font-size:8.4px;font-weight:bold;color:#333">Comportamento</div>
    <div class="abs" style="left:22px;top:399px;width:259.5px;height:15.2px;background:#d3efdf"></div>
    <svg class="abs" style="left:28.5px;top:404.2px" width="4" height="5" viewBox="0 0 4 5" ><path d="M0.3 0L3.3 2.5L0.3 5Z" fill="#666"/></svg>
    <div class="t" style="left:37.5px;top:406.2px;transform:translateY(-50%);font-size:8.4px;font-weight:bold;color:#333">Design</div>
    <div class="abs" style="left:281.5px;top:117px;width:672.5px;height:1px;background:#dcdcdc"></div>
    <div class="abs" style="left:292.3px;top:95.6px;width:53.2px;height:22px;background:#fff;border:1px solid #dcdcdc;border-top:1.5px solid #0d6335;border-bottom:none"></div>
    <div class="t" style="left:318.7px;top:106px;transform:translate(-50%,-50%);font-size:8.4px;color:#86b59b">Page1</div>
    <div class="abs" style="left:355.3px;top:103.9px;width:8.4px;height:1.2px;background:#333"></div>
    <div class="abs" style="left:358.9px;top:100.3px;width:1.2px;height:8.4px;background:#333"></div>
    <div class="abs" style="left:335px;top:118px;width:609px;height:349px;background:#fff"></div>
    <div class="abs" style="left:335px;top:118px;width:609px;height:88.4px;background:#f8f8f8"></div>
    <div class="abs" style="left:335px;top:311.4px;width:609px;height:14.4px;background:#fbfbfb"></div>
    <div class="abs" style="left:335px;top:350.2px;width:609px;height:65.8px;background:#f2f2f2"></div>
    <div class="abs" style="left:335px;top:445px;width:609px;height:11.5px;background:#f8f8f8"></div>
    <div class="abs" style="left:335px;top:118px;width:609px;height:349px;background-image:linear-gradient(to right,rgba(0,0,0,0.09) 1px,transparent 1px),linear-gradient(to right,rgba(0,0,0,0.055) 1px,transparent 1px),linear-gradient(to bottom,rgba(0,0,0,0.09) 1px,transparent 1px),linear-gradient(to bottom,rgba(0,0,0,0.055) 1px,transparent 1px);background-size:13.3px 13.3px;background-position:13.5px 0,6.899999999999977px 0,0 1.6999999999999886px,0 8.300000000000011px"></div>
    <div class="abs" style="left:335px;top:118px;width:1px;height:349px;background:#b8b8b8"></div>
    <div class="abs" style="left:335px;top:206px;width:609px;height:1px;border-top:1px dashed #e0e0e0"></div>
    <div class="abs" style="left:947px;top:118px;width:6px;height:235.6px;background:#8a8a8a"></div>
    <div class="abs" style="left:362.3px;top:118px;width:92.3px;height:62px;background:rgba(150,185,150,0.38)"></div>
    <div class="abs" style="left:362.3px;top:177.5px;width:3px;height:3px;border-bottom:1px solid;border-left:1px solid;border-color:#333"></div>
    <div class="abs" style="left:451.8px;top:177.5px;width:3px;height:3px;border-bottom:1px solid;border-right:1px solid;border-color:#333"></div>
    <div class="abs" style="left:480.3px;top:118px;width:114.7px;height:6px;overflow:hidden"><div class="t" style="left:0;top:-4.5px;font-family:'Liberation Serif',serif;font-size:8.9px;color:#222">CNPJ: {filial.cgc}</div></div>
    <div class="t" style="left:480.3px;top:132.1px;transform:translateY(-50%);font-family:'Liberation Serif',serif;font-size:8.9px;color:#222">END: {endrecoFilial.logradouro}</div>
    <div class="abs" style="left:477.4px;top:126.0px;width:3px;height:3px;border-top:1px solid;border-left:1px solid;border-color:#333"></div>
    <div class="abs" style="left:477.4px;top:124.0px;width:3px;height:3px;border-bottom:1px solid;border-left:1px solid;border-color:#333"></div>
    <div class="t" style="left:480.3px;top:145.8px;transform:translateY(-50%);font-family:'Liberation Serif',serif;font-size:8.9px;color:#222">BAIRRO: {endrecoFilial.bairro}</div>
    <div class="abs" style="left:477.4px;top:139.7px;width:3px;height:3px;border-top:1px solid;border-left:1px solid;border-color:#333"></div>
    <div class="abs" style="left:477.4px;top:137.7px;width:3px;height:3px;border-bottom:1px solid;border-left:1px solid;border-color:#333"></div>
    <div class="t" style="left:480.3px;top:159.4px;transform:translateY(-50%);font-family:'Liberation Serif',serif;font-size:8.9px;color:#222">CIDADE/UF: {endrecoFilial.cidade}</div>
    <div class="abs" style="left:477.4px;top:153.3px;width:3px;height:3px;border-top:1px solid;border-left:1px solid;border-color:#333"></div>
    <div class="abs" style="left:477.4px;top:151.3px;width:3px;height:3px;border-bottom:1px solid;border-left:1px solid;border-color:#333"></div>
    <div class="t" style="left:480.3px;top:172.6px;transform:translateY(-50%);font-family:'Liberation Serif',serif;font-size:8.9px;color:#222">CEP: {endrecoFilial.cep}</div>
    <div class="abs" style="left:477.4px;top:166.5px;width:3px;height:3px;border-top:1px solid;border-left:1px solid;border-color:#333"></div>
    <div class="abs" style="left:477.4px;top:164.5px;width:3px;height:3px;border-bottom:1px solid;border-left:1px solid;border-color:#333"></div>
    <div class="t" style="left:480.3px;top:186.3px;transform:translateY(-50%);font-family:'Liberation Serif',serif;font-size:8.9px;color:#222;font-weight:bold">FONE: {filial.telefone}</div>
    <div class="abs" style="left:477.4px;top:179.8px;width:3px;height:3px;border-top:1px solid;border-left:1px solid;border-color:#333"></div>
    <div class="abs" style="left:477.4px;top:177.8px;width:3px;height:3px;border-bottom:1px solid;border-left:1px solid;border-color:#333"></div>
    <div class="abs" style="left:477.4px;top:190.3px;width:3px;height:3px;border-bottom:1px solid;border-left:1px solid;border-color:#333"></div>
    <div class="abs" style="left:607px;top:190.3px;width:3px;height:3px;border-bottom:1px solid;border-right:1px solid;border-color:#333"></div>
    <div class="abs" style="left:607px;top:179.8px;width:3px;height:3px;border-top:1px solid;border-right:1px solid;border-color:#333"></div>
    <div class="abs" style="left:725.7px;top:180px;width:3px;height:3px;border-top:1px solid;border-left:1px solid;border-color:#333"></div>
    <div class="abs" style="left:928.4px;top:180px;width:3px;height:3px;border-top:1px solid;border-right:1px solid;border-color:#333"></div>
    <div class="abs" style="left:725.7px;top:190.3px;width:3px;height:3px;border-bottom:1px solid;border-left:1px solid;border-color:#333"></div>
    <div class="abs" style="left:928.4px;top:190.3px;width:3px;height:3px;border-bottom:1px solid;border-right:1px solid;border-color:#333"></div>
    <div class="t" style="left:728px;top:186.2px;transform:translateY(-50%);font-family:'Liberation Serif',serif;font-size:8.9px;color:#222">COD. {representante.codigo} - {representante.nome}</div>
    <div class="abs" style="left:335px;top:219px;width:609px;height:13px;background:#77a6d6"></div>
    <div class="t" style="left:337.2px;top:226.8px;transform:translateY(-50%);font-size:9.75px;color:#1a1a1a">DataBand1; Fonte de dados: Cliente</div>
    <div class="abs" style="left:335px;top:232.3px;width:609px;height:46.5px;background:#dcdcdc;border-top:1px solid #555;border-bottom:1px solid #666;border-left:1px solid #666"></div>
    <div class="abs" style="left:338.4px;top:240.2px;width:252.4px;height:9.4px;background:#e6e6e6"></div>
    <div class="abs" style="left:338.4px;top:240.2px;width:3px;height:3px;border-top:1px solid;border-left:1px solid;border-color:#333"></div>
    <div class="abs" style="left:587.8px;top:240.2px;width:3px;height:3px;border-top:1px solid;border-right:1px solid;border-color:#333"></div>
    <div class="abs" style="left:338.4px;top:246.6px;width:3px;height:3px;border-bottom:1px solid;border-left:1px solid;border-color:#333"></div>
    <div class="abs" style="left:587.8px;top:246.6px;width:3px;height:3px;border-bottom:1px solid;border-right:1px solid;border-color:#333"></div>
    <div class="abs" style="left:338.4px;top:253.4px;width:252.4px;height:9.4px;background:#e6e6e6"></div>
    <div class="abs" style="left:338.4px;top:253.4px;width:3px;height:3px;border-top:1px solid;border-left:1px solid;border-color:#333"></div>
    <div class="abs" style="left:587.8px;top:253.4px;width:3px;height:3px;border-top:1px solid;border-right:1px solid;border-color:#333"></div>
    <div class="abs" style="left:338.4px;top:259.8px;width:3px;height:3px;border-bottom:1px solid;border-left:1px solid;border-color:#333"></div>
    <div class="abs" style="left:587.8px;top:259.8px;width:3px;height:3px;border-bottom:1px solid;border-right:1px solid;border-color:#333"></div>
    <div class="t" style="left:338.5px;top:242.6px;transform:translateY(-50%);font-size:15.5px;color:transparent;-webkit-text-stroke:0.8px #fafafa;text-shadow:0.7px 0.7px 0 rgba(110,110,110,0.6)">Band1</div>
    <div class="t" style="left:340.8px;top:245px;transform:translateY(-50%);font-family:'Liberation Serif',serif;font-size:8.9px;color:#222">CLIENTE: {cliente.codigo}-{cliente.nome}</div>
    <div class="t" style="left:340.8px;top:258.5px;transform:translateY(-50%);font-family:'Liberation Serif',serif;font-size:8.9px;color:#222">END. COM: {enderecoComercialCliente.logradouro}</div>
    <div class="abs" style="left:649.6px;top:239.8px;width:178.7px;height:9.8px;background:#e6e6e6"></div>
    <div class="abs" style="left:649.6px;top:239.8px;width:3px;height:3px;border-top:1px solid;border-left:1px solid;border-color:#333"></div>
    <div class="abs" style="left:825.3px;top:239.8px;width:3px;height:3px;border-top:1px solid;border-right:1px solid;border-color:#333"></div>
    <div class="abs" style="left:649.6px;top:246.6px;width:3px;height:3px;border-bottom:1px solid;border-left:1px solid;border-color:#333"></div>
    <div class="abs" style="left:825.3px;top:246.6px;width:3px;height:3px;border-bottom:1px solid;border-right:1px solid;border-color:#333"></div>
    <div class="t" style="left:652.5px;top:244.8px;transform:translateY(-50%);font-family:'Liberation Serif',serif;font-size:8.9px;color:#222">CPF/CNPJ: {cliente.cnpj}</div>
    <div class="abs" style="left:649.6px;top:253.2px;width:178.7px;height:9.8px;background:#e6e6e6"></div>
    <div class="abs" style="left:649.6px;top:253.2px;width:3px;height:3px;border-top:1px solid;border-left:1px solid;border-color:#333"></div>
    <div class="abs" style="left:825.3px;top:253.2px;width:3px;height:3px;border-top:1px solid;border-right:1px solid;border-color:#333"></div>
    <div class="abs" style="left:649.6px;top:260px;width:3px;height:3px;border-bottom:1px solid;border-left:1px solid;border-color:#333"></div>
    <div class="abs" style="left:825.3px;top:260px;width:3px;height:3px;border-bottom:1px solid;border-right:1px solid;border-color:#333"></div>
    <div class="t" style="left:652.5px;top:258.3px;transform:translateY(-50%);font-family:'Liberation Serif',serif;font-size:8.9px;color:#222">BAIRRO: {enderecoComercialCliente.bairro}</div>
    <div class="abs" style="left:649.6px;top:266.2px;width:86.4px;height:10.3px;background:#e6e6e6"></div>
    <div class="abs" style="left:649.6px;top:266.2px;width:3px;height:3px;border-top:1px solid;border-left:1px solid;border-color:#333"></div>
    <div class="abs" style="left:733px;top:266.2px;width:3px;height:3px;border-top:1px solid;border-right:1px solid;border-color:#333"></div>
    <div class="abs" style="left:649.6px;top:273.5px;width:3px;height:3px;border-bottom:1px solid;border-left:1px solid;border-color:#333"></div>
    <div class="abs" style="left:733px;top:273.5px;width:3px;height:3px;border-bottom:1px solid;border-right:1px solid;border-color:#333"></div>
    <div class="t" style="left:652.5px;top:271.3px;transform:translateY(-50%);font-family:'Liberation Serif',serif;font-size:8.9px;color:#222">DATA DE ENTREGA:</div>
    <div class="abs" style="left:739.5px;top:266.2px;width:125.5px;height:10.3px;background:#e6e6e6"></div>
    <div class="abs" style="left:739.5px;top:266.2px;width:3px;height:3px;border-top:1px solid;border-left:1px solid;border-color:#333"></div>
    <div class="abs" style="left:862px;top:266.2px;width:3px;height:3px;border-top:1px solid;border-right:1px solid;border-color:#333"></div>
    <div class="abs" style="left:739.5px;top:273.5px;width:3px;height:3px;border-bottom:1px solid;border-left:1px solid;border-color:#333"></div>
    <div class="abs" style="left:862px;top:273.5px;width:3px;height:3px;border-bottom:1px solid;border-right:1px solid;border-color:#333"></div>
    <div class="abs" style="left:742px;top:265px;width:123px;height:13px;overflow:hidden"><div class="t" style="left:0;top:6.3px;transform:translateY(-50%);font-family:'Liberation Serif',serif;font-size:8.9px;color:#222">{DadosEntregaPedido.dataEntrega}</div></div>
    <div class="abs" style="left:870.8px;top:239.8px;width:73.2px;height:9.8px;background:#e6e6e6"></div>
    <div class="abs" style="left:870.8px;top:239.8px;width:3px;height:3px;border-top:1px solid;border-left:1px solid;border-color:#333"></div>
    <div class="abs" style="left:870.8px;top:246.6px;width:3px;height:3px;border-bottom:1px solid;border-left:1px solid;border-color:#333"></div>
    <div class="abs" style="left:873.7px;top:238.8px;width:70.3px;height:13.0px;overflow:hidden"><div class="t" style="left:0;top:5.900000000000006px;transform:translateY(-50%);font-family:'Liberation Serif',serif;font-size:8.9px;color:#222">CIDADE: {enderecoComercialCliente.cidade}</div></div>
    <div class="abs" style="left:870.8px;top:253.2px;width:73.2px;height:9.8px;background:#e6e6e6"></div>
    <div class="abs" style="left:870.8px;top:253.2px;width:3px;height:3px;border-top:1px solid;border-left:1px solid;border-color:#333"></div>
    <div class="abs" style="left:870.8px;top:260px;width:3px;height:3px;border-bottom:1px solid;border-left:1px solid;border-color:#333"></div>
    <div class="abs" style="left:873.7px;top:252.2px;width:70.3px;height:13.0px;overflow:hidden"><div class="t" style="left:0;top:5.900000000000006px;transform:translateY(-50%);font-family:'Liberation Serif',serif;font-size:8.9px;color:#222">UF: {enderecoDoCliente.uf}</div></div>
    <div class="abs" style="left:870.8px;top:266.2px;width:73.2px;height:10.3px;background:#e6e6e6"></div>
    <div class="abs" style="left:870.8px;top:266.2px;width:3px;height:3px;border-top:1px solid;border-left:1px solid;border-color:#333"></div>
    <div class="abs" style="left:870.8px;top:273.5px;width:3px;height:3px;border-bottom:1px solid;border-left:1px solid;border-color:#333"></div>
    <div class="abs" style="left:873.7px;top:265.2px;width:70.3px;height:13.0px;overflow:hidden"><div class="t" style="left:0;top:6.150000000000006px;transform:translateY(-50%);font-family:'Liberation Serif',serif;font-size:8.9px;color:#222">ID PEDIDO: {DadosPedido.id}</div></div>
    <div class="abs" style="left:335px;top:279px;width:609px;height:5.5px;background:rgba(120,165,220,0.17)"></div>
    <div class="abs" style="left:335px;top:284.5px;width:609px;height:1px;background:repeating-linear-gradient(to right,#7fabdd 0 2px,transparent 2px 4px)"></div>
    <div class="abs" style="left:781.4px;top:282.3px;width:3px;height:5px;background:#777;border-radius:1.5px"></div>
    <div class="abs" style="left:333.5px;top:283px;width:3.5px;height:3.5px;border:1px solid #999;background:#fff"></div>
    <div class="abs" style="left:333.5px;top:230.5px;width:3.5px;height:3.5px;border:1px solid #aaa;background:#eee"></div>
    <div class="abs" style="left:335px;top:298.9px;width:609px;height:12.5px;background:#bfcfe6"></div>
    <div class="t" style="left:337.2px;top:306.1px;transform:translateY(-50%);font-size:9.75px;color:#1a1a1a">HeaderBand2</div>
    <div class="abs" style="left:336px;top:311.4px;width:608px;height:14.4px;background:#fbfbfb"></div>
    <div class="t" style="left:358.7px;top:318px;transform:translate(-50%,-50%);font-family:'Liberation Serif',serif;font-size:7px;font-weight:bold;color:#222">ITEM</div>
    <div class="t" style="left:404.7px;top:318px;transform:translate(-50%,-50%);font-family:'Liberation Serif',serif;font-size:7px;font-weight:bold;color:#222">FOTO</div>
    <div class="t" style="left:443.9px;top:318px;transform:translate(-50%,-50%);font-family:'Liberation Serif',serif;font-size:7px;font-weight:bold;color:#222">COD.</div>
    <div class="t" style="left:507.6px;top:318px;transform:translate(-50%,-50%);font-family:'Liberation Serif',serif;font-size:7px;font-weight:bold;color:#222">DESCRICAO</div>
    <div class="t" style="left:570px;top:318px;transform:translate(-50%,-50%);font-family:'Liberation Serif',serif;font-size:7px;font-weight:bold;color:#222">EMB.</div>
    <div class="t" style="left:612.8px;top:318px;transform:translate(-50%,-50%);font-family:'Liberation Serif',serif;font-size:7px;font-weight:bold;color:#222">COD. FAB.</div>
    <div class="t" style="left:665.7px;top:318px;transform:translate(-50%,-50%);font-family:'Liberation Serif',serif;font-size:7px;font-weight:bold;color:#222">COD. MARCA</div>
    <div class="t" style="left:721.6px;top:318px;transform:translate(-50%,-50%);font-family:'Liberation Serif',serif;font-size:7px;font-weight:bold;color:#222">MARCA</div>
    <div class="t" style="left:932.9px;top:318px;transform:translate(-50%,-50%);font-family:'Liberation Serif',serif;font-size:7px;font-weight:bold;color:#222">UN</div>
    <div class="abs" style="left:755.2px;top:311.5px;width:62.8px;height:13.0px;overflow:hidden"><div class="t" style="left:0;top:6.3px;transform:translateY(-50%);font-family:'Liberation Serif',serif;font-size:8.8px;color:#222">{Produtos_Categoria.codigo}</div></div>
    <div class="abs" style="left:821.3px;top:311.5px;width:96.0px;height:13.0px;overflow:hidden"><div class="t" style="left:0;top:6.3px;transform:translateY(-50%);font-family:'Liberation Serif',serif;font-size:8.8px;color:#222">{Produtos_Categoria.nome}</div></div>
    <div class="abs" style="left:380.2px;top:311.8px;width:4px;height:1px;background:#777"></div>
    <div class="abs" style="left:381.7px;top:311.8px;width:1px;height:3px;background:#777"></div>
    <div class="abs" style="left:380.2px;top:325.2px;width:4px;height:1px;background:#777"></div>
    <div class="abs" style="left:381.7px;top:323.2px;width:1px;height:3px;background:#777"></div>
    <div class="abs" style="left:425.7px;top:311.8px;width:4px;height:1px;background:#777"></div>
    <div class="abs" style="left:427.2px;top:311.8px;width:1px;height:3px;background:#777"></div>
    <div class="abs" style="left:425.7px;top:325.2px;width:4px;height:1px;background:#777"></div>
    <div class="abs" style="left:427.2px;top:323.2px;width:1px;height:3px;background:#777"></div>
    <div class="abs" style="left:459.6px;top:311.8px;width:4px;height:1px;background:#777"></div>
    <div class="abs" style="left:461.1px;top:311.8px;width:1px;height:3px;background:#777"></div>
    <div class="abs" style="left:459.6px;top:325.2px;width:4px;height:1px;background:#777"></div>
    <div class="abs" style="left:461.1px;top:323.2px;width:1px;height:3px;background:#777"></div>
    <div class="abs" style="left:551.8px;top:311.8px;width:4px;height:1px;background:#777"></div>
    <div class="abs" style="left:553.3px;top:311.8px;width:1px;height:3px;background:#777"></div>
    <div class="abs" style="left:551.8px;top:325.2px;width:4px;height:1px;background:#777"></div>
    <div class="abs" style="left:553.3px;top:323.2px;width:1px;height:3px;background:#777"></div>
    <div class="abs" style="left:584.3px;top:311.8px;width:4px;height:1px;background:#777"></div>
    <div class="abs" style="left:585.8px;top:311.8px;width:1px;height:3px;background:#777"></div>
    <div class="abs" style="left:584.3px;top:325.2px;width:4px;height:1px;background:#777"></div>
    <div class="abs" style="left:585.8px;top:323.2px;width:1px;height:3px;background:#777"></div>
    <div class="abs" style="left:634.5px;top:311.8px;width:4px;height:1px;background:#777"></div>
    <div class="abs" style="left:636.0px;top:311.8px;width:1px;height:3px;background:#777"></div>
    <div class="abs" style="left:634.5px;top:325.2px;width:4px;height:1px;background:#777"></div>
    <div class="abs" style="left:636.0px;top:323.2px;width:1px;height:3px;background:#777"></div>
    <div class="abs" style="left:692.3px;top:311.8px;width:4px;height:1px;background:#777"></div>
    <div class="abs" style="left:693.8px;top:311.8px;width:1px;height:3px;background:#777"></div>
    <div class="abs" style="left:692.3px;top:325.2px;width:4px;height:1px;background:#777"></div>
    <div class="abs" style="left:693.8px;top:323.2px;width:1px;height:3px;background:#777"></div>
    <div class="abs" style="left:751.2px;top:311.8px;width:4px;height:1px;background:#777"></div>
    <div class="abs" style="left:752.7px;top:311.8px;width:1px;height:3px;background:#777"></div>
    <div class="abs" style="left:751.2px;top:325.2px;width:4px;height:1px;background:#777"></div>
    <div class="abs" style="left:752.7px;top:323.2px;width:1px;height:3px;background:#777"></div>
    <div class="abs" style="left:816.4px;top:311.8px;width:4px;height:1px;background:#777"></div>
    <div class="abs" style="left:817.9px;top:311.8px;width:1px;height:3px;background:#777"></div>
    <div class="abs" style="left:816.4px;top:325.2px;width:4px;height:1px;background:#777"></div>
    <div class="abs" style="left:817.9px;top:323.2px;width:1px;height:3px;background:#777"></div>
    <div class="abs" style="left:915px;top:311.8px;width:4px;height:1px;background:#777"></div>
    <div class="abs" style="left:916.5px;top:311.8px;width:1px;height:3px;background:#777"></div>
    <div class="abs" style="left:915px;top:325.2px;width:4px;height:1px;background:#777"></div>
    <div class="abs" style="left:916.5px;top:323.2px;width:1px;height:3px;background:#777"></div>
    <div class="abs" style="left:335px;top:337.9px;width:609px;height:12.3px;background:#77a6d6"></div>
    <div class="t" style="left:337.2px;top:345.4px;transform:translateY(-50%);font-size:9.75px;color:#1a1a1a">DataBand2; Fonte de dados: Produtos_EmbalagemSelecionada</div>
    <div class="abs" style="left:336px;top:350.2px;width:608px;height:22.2px;background:#f8f8f8"></div>
    <div class="abs" style="left:380.2px;top:351.3px;width:4px;height:1px;background:#777"></div>
    <div class="abs" style="left:381.7px;top:351.3px;width:1px;height:3px;background:#777"></div>
    <div class="abs" style="left:380.2px;top:371.2px;width:4px;height:1px;background:#777"></div>
    <div class="abs" style="left:381.7px;top:369.2px;width:1px;height:3px;background:#777"></div>
    <div class="abs" style="left:425.7px;top:351.3px;width:4px;height:1px;background:#777"></div>
    <div class="abs" style="left:427.2px;top:351.3px;width:1px;height:3px;background:#777"></div>
    <div class="abs" style="left:425.7px;top:371.2px;width:4px;height:1px;background:#777"></div>
    <div class="abs" style="left:427.2px;top:369.2px;width:1px;height:3px;background:#777"></div>
    <div class="abs" style="left:459.6px;top:351.3px;width:4px;height:1px;background:#777"></div>
    <div class="abs" style="left:461.1px;top:351.3px;width:1px;height:3px;background:#777"></div>
    <div class="abs" style="left:459.6px;top:371.2px;width:4px;height:1px;background:#777"></div>
    <div class="abs" style="left:461.1px;top:369.2px;width:1px;height:3px;background:#777"></div>
    <div class="abs" style="left:551.8px;top:351.3px;width:4px;height:1px;background:#777"></div>
    <div class="abs" style="left:553.3px;top:351.3px;width:1px;height:3px;background:#777"></div>
    <div class="abs" style="left:551.8px;top:371.2px;width:4px;height:1px;background:#777"></div>
    <div class="abs" style="left:553.3px;top:369.2px;width:1px;height:3px;background:#777"></div>
    <div class="abs" style="left:584.3px;top:351.3px;width:4px;height:1px;background:#777"></div>
    <div class="abs" style="left:585.8px;top:351.3px;width:1px;height:3px;background:#777"></div>
    <div class="abs" style="left:584.3px;top:371.2px;width:4px;height:1px;background:#777"></div>
    <div class="abs" style="left:585.8px;top:369.2px;width:1px;height:3px;background:#777"></div>
    <div class="abs" style="left:634.5px;top:351.3px;width:4px;height:1px;background:#777"></div>
    <div class="abs" style="left:636.0px;top:351.3px;width:1px;height:3px;background:#777"></div>
    <div class="abs" style="left:634.5px;top:371.2px;width:4px;height:1px;background:#777"></div>
    <div class="abs" style="left:636.0px;top:369.2px;width:1px;height:3px;background:#777"></div>
    <div class="abs" style="left:692.3px;top:351.3px;width:4px;height:1px;background:#777"></div>
    <div class="abs" style="left:693.8px;top:351.3px;width:1px;height:3px;background:#777"></div>
    <div class="abs" style="left:692.3px;top:371.2px;width:4px;height:1px;background:#777"></div>
    <div class="abs" style="left:693.8px;top:369.2px;width:1px;height:3px;background:#777"></div>
    <div class="abs" style="left:751.2px;top:351.3px;width:4px;height:1px;background:#777"></div>
    <div class="abs" style="left:752.7px;top:351.3px;width:1px;height:3px;background:#777"></div>
    <div class="abs" style="left:751.2px;top:371.2px;width:4px;height:1px;background:#777"></div>
    <div class="abs" style="left:752.7px;top:369.2px;width:1px;height:3px;background:#777"></div>
    <div class="abs" style="left:816.4px;top:351.3px;width:4px;height:1px;background:#777"></div>
    <div class="abs" style="left:817.9px;top:351.3px;width:1px;height:3px;background:#777"></div>
    <div class="abs" style="left:816.4px;top:371.2px;width:4px;height:1px;background:#777"></div>
    <div class="abs" style="left:817.9px;top:369.2px;width:1px;height:3px;background:#777"></div>
    <div class="abs" style="left:915px;top:351.3px;width:4px;height:1px;background:#777"></div>
    <div class="abs" style="left:916.5px;top:351.3px;width:1px;height:3px;background:#777"></div>
    <div class="abs" style="left:915px;top:371.2px;width:4px;height:1px;background:#777"></div>
    <div class="abs" style="left:916.5px;top:369.2px;width:1px;height:3px;background:#777"></div>
    <div class="t" style="left:358.7px;top:360.8px;transform:translate(-50%,-50%);font-family:'Liberation Serif',serif;font-size:6.6px;color:#333;color:#5a2050">{Line}</div>
    <div class="abs" style="left:388.9px;top:352.1px;width:33.1px;height:18.3px;background:#ccdcc9"></div>
    <div class="abs" style="left:388.4px;top:351.5px;width:3px;height:3px;border-top:1px solid;border-left:1px solid;border-color:#333"></div>
    <div class="abs" style="left:419.4px;top:351.5px;width:3px;height:3px;border-top:1px solid;border-right:1px solid;border-color:#333"></div>
    <div class="abs" style="left:388.4px;top:368.5px;width:3px;height:3px;border-bottom:1px solid;border-left:1px solid;border-color:#333"></div>
    <div class="abs" style="left:419.4px;top:368.5px;width:3px;height:3px;border-bottom:1px solid;border-right:1px solid;border-color:#333"></div>
    <div class="abs" style="left:390px;top:351px;width:32px;height:14px;overflow:hidden"><div class="t" style="left:0;top:6.6px;transform:translateY(-50%);font-size:9.4px;color:#222">URL da Foto</div></div>
    <div class="abs" style="left:428.5px;top:354.8px;width:33.1px;height:12.0px;overflow:hidden"><div class="t" style="left:50%;top:6px;transform:translate(-50%,-50%);margin-left:-11.3px;font-family:'Liberation Serif',serif;font-size:6.6px;color:#333">{Produtos_EmbalagemSelecionada.codigo}</div></div>
    <div class="t" style="left:507.6px;top:356.6px;transform:translate(-50%,-50%);font-family:'Liberation Serif',serif;font-size:6.6px;color:#333">{Produtos_EmbalagemSelecio</div>
    <div class="t" style="left:507.6px;top:365px;transform:translate(-50%,-50%);font-family:'Liberation Serif',serif;font-size:6.6px;color:#333">nada.Produtos.descricao}</div>
    <div class="abs" style="left:554.3px;top:354.8px;width:32.0px;height:12.0px;overflow:hidden"><div class="t" style="left:50%;top:6px;transform:translate(-50%,-50%);margin-left:0px;font-family:'Liberation Serif',serif;font-size:6.6px;color:#333">{Produtos_EmbalagemSelecionada.embalagem}</div></div>
    <div class="abs" style="left:586.8px;top:354.8px;width:49.7px;height:12.0px;overflow:hidden"><div class="t" style="left:50%;top:6px;transform:translate(-50%,-50%);margin-left:-10px;font-family:'Liberation Serif',serif;font-size:6.6px;color:#333">{Produtos_EmbalagemSelecionada.Produtos.codfab}</div></div>
    <div class="abs" style="left:637px;top:354.8px;width:57.3px;height:12.0px;overflow:hidden"><div class="t" style="left:50%;top:6px;transform:translate(-50%,-50%);margin-left:-4px;font-family:'Liberation Serif',serif;font-size:6.6px;color:#333">{Produtos_EmbalagemSelecionada.Produtos.codmarca}</div></div>
    <div class="abs" style="left:694.8px;top:354.8px;width:58.4px;height:12.0px;overflow:hidden"><div class="t" style="left:50%;top:6px;transform:translate(-50%,-50%);margin-left:-9px;font-family:'Liberation Serif',serif;font-size:6.6px;color:#333">{Produtos_EmbalagemSelecionada.DadosMarca.marca}</div></div>
    <div class="abs" style="left:753.7px;top:354.8px;width:64.7px;height:12.0px;overflow:hidden"><div class="t" style="left:50%;top:6px;transform:translate(-50%,-50%);margin-left:1px;font-family:'Liberation Serif',serif;font-size:6.6px;color:#333">{Produtos_EmbalagemSelecionada.Fornecedor.codigo}</div></div>
    <div class="t" style="left:867.8px;top:356.6px;transform:translate(-50%,-50%);font-family:'Liberation Serif',serif;font-size:6.6px;color:#333">{Produtos_EmbalagemSeleciona</div>
    <div class="t" style="left:867.8px;top:365px;transform:translate(-50%,-50%);font-family:'Liberation Serif',serif;font-size:6.6px;color:#333">da.Fornecedor.nome}</div>
    <div class="abs" style="left:917.5px;top:354.8px;width:26.5px;height:12.0px;overflow:hidden"><div class="t" style="left:50%;top:6px;transform:translate(-50%,-50%);margin-left:5px;font-family:'Liberation Serif',serif;font-size:6.6px;color:#333">{Produtos_EmbalagemSelecionada.unidade}</div></div>
    <div class="abs" style="left:337.4px;top:372.4px;width:606.6px;height:43.6px;background:#f2f2f2"></div>
    <div class="abs" style="left:335px;top:431.2px;width:609px;height:13.6px;background:#77a6d6"></div>
    <div class="t" style="left:337.2px;top:438.8px;transform:translateY(-50%);font-size:9.75px;color:#1a1a1a">DataBand3; Fonte de dados: Não Nomeado</div>
    <div class="abs" style="left:335px;top:455.8px;width:609px;height:13px;background:#dcdcdc;border-top:1px solid #555;border-left:1px solid #666"></div>
    <div class="t" style="left:338.5px;top:466.8px;transform:translateY(-50%);font-size:15.5px;color:#e6e6e6;-webkit-text-stroke:0.7px #777">Band2</div>
    <div class="abs" style="left:338.4px;top:462.5px;width:3px;height:3px;border-top:1px solid;border-left:1px solid;border-color:#333"></div>
    <div class="abs" style="left:749px;top:462.5px;width:3px;height:3px;border-top:1px solid;border-right:1px solid;border-color:#333"></div>
    <div class="t" style="left:484.5px;top:468px;transform:translateY(-50%);font-family:'Liberation Serif',serif;font-size:10px;color:#333">Texto</div>
  </div>
</div>
<div class="abs" style="left:804px;top:8px;width:478px;height:367.5px;background:#fff;border:1px solid #6b6b6b;box-shadow:inset 1px 0 0 #4a9a6a"></div>
<div class="t" style="left:816.6px;top:18.4px;transform:translateY(-50%);font-size:9.1px;font-weight:bold;color:#3d9764">Dados</div>
<div class="t" style="left:1253.2px;top:18.6px;transform:translate(-50%,-50%);font-size:10px;font-weight:bold;color:#444">?</div>
<svg class="abs" style="left:1269px;top:15.5px" width="6" height="6" viewBox="0 0 6 6" ><path d="M0.5 0.5L5.5 5.5M5.5 0.5L0.5 5.5" stroke="#555" stroke-width="1.2"/></svg>
<div class="abs" style="left:807px;top:28.2px;width:474px;height:1px;background:#e4e4e4"></div>
<div class="abs" style="left:807px;top:51px;width:395px;height:1px;background:#e4e4e4"></div>
<svg class="abs" style="left:810.5px;top:34px" width="12" height="12" viewBox="0 0 12 12" ><rect x="0.3" y="0.5" width="4.4" height="4" fill="#f2c56b"/><text x="4.6" y="7" font-family="Liberation Sans, sans-serif" font-size="5" font-weight="bold" fill="#4a86d0">A</text><text x="4.7" y="11.6" font-family="Liberation Sans, sans-serif" font-size="5" font-weight="bold" fill="#9a4fc0">Z</text><path d="M10 3.5V11.3" stroke="#555" stroke-width="0.9"/><path d="M4.4 7.6H8" stroke="#888" stroke-width="0.4"/></svg>
<div class="t" style="left:824.3px;top:40px;transform:translateY(-50%);font-size:8.4px;color:#3a3a3a">Adicionar Ordem</div>
<svg class="abs" style="left:894.2px;top:35px" width="10" height="10" viewBox="0 0 10 10" ><path d="M0.8 1C3.6 3.2 6.4 6.2 9.2 9.4M9 0.8C6 3.6 3.6 6.4 1 9.4" stroke="#d4482c" stroke-width="1.9" fill="none" stroke-linecap="round"/></svg>
<div class="t" style="left:907.2px;top:40px;transform:translateY(-50%);font-size:8.4px;color:#3a3a3a">Remover Ordem</div>
<div class="abs" style="left:974.6px;top:32.4px;width:1px;height:15px;background:#d9d9d9"></div>
<svg class="abs" style="left:980px;top:37.3px" width="8" height="6" viewBox="0 0 8 6" ><path d="M4 0L8 3.4H5.6V5.4H2.4V3.4H0Z" fill="#a9c9ef"/></svg>
<svg class="abs" style="left:995.4px;top:37.3px" width="8" height="6" viewBox="0 0 8 6" ><path d="M4 5.4L8 2H5.6V0H2.4V2H0Z" fill="#a9c9ef"/></svg>
<div class="abs" style="left:810px;top:56px;width:386.5px;height:24px;background:#d3f0e0;border:1px solid #a9dcc0"></div>
<div class="t" style="left:814.3px;top:68px;transform:translateY(-50%);font-size:8.4px;color:#3a3a3a">Ordene por</div>
<div class="abs" style="left:864px;top:60.3px;width:145.3px;height:15.4px;background:#fff;border:1px solid #b8b8b8"></div>
<div class="t" style="left:868px;top:68px;transform:translateY(-50%);font-size:8.4px;color:#3a3a3a">Sem Ordem</div>
<div class="abs" style="left:982.4px;top:60.3px;width:1px;height:15.4px;background:#c9c9c9"></div>
<div class="abs" style="left:995.5px;top:60.3px;width:1px;height:15.4px;background:#c9c9c9"></div>
<div class="t" style="left:989.2px;top:67.8px;transform:translate(-50%,-50%);font-family:'Liberation Serif',serif;font-style:italic;font-size:10.5px;color:#222">fx</div>
<svg class="abs" style="left:998px;top:63.5px" width="9" height="9" viewBox="0 0 9 9" ><path d="M0.8 8.2L1.5 5.6L6.6 0.5L8.5 2.4L3.4 7.5Z" fill="#3b7bd0"/><path d="M0.8 8.2L1.5 5.6L3.4 7.5Z" fill="#2a4f8a"/></svg>
<div class="t" style="left:1020.5px;top:68px;transform:translateY(-50%);font-size:8.4px;color:#3a3a3a">Crescente</div>
<svg class="abs" style="left:1061.8px;top:67.2px" width="4" height="3" viewBox="0 0 4 3" ><path d="M0 0H4L2 2.4Z" fill="#555"/></svg>
<div class="abs" style="left:1201.8px;top:29px;width:1px;height:318px;background:#e4e4e4"></div>
<div class="abs" style="left:1203px;top:184.9px;width:78px;height:48.8px;background:#9ed3b4"></div>
<svg class="abs" style="left:1231px;top:34.8px" width="22" height="22" viewBox="0 0 22 22" ><rect x="0.6" y="0.6" width="18" height="18" fill="#fff" stroke="#8a8a8a" stroke-width="1.1"/><rect x="3" y="3" width="13.2" height="13" fill="#eef2f8" stroke="#8a8a8a" stroke-width="0.6"/><rect x="3" y="3" width="13.2" height="2.6" fill="#3f6fb0"/><path d="M5 7V15M7 7V15M9 7V15M11 7V15M13 7V15M4 9H15M4 11.5H15M4 13.5H15" stroke="#c5d3e8" stroke-width="0.8"/><rect x="12" y="12" width="9.5" height="9.5" fill="#fff" stroke="#8a8a8a" stroke-width="0.8"/><rect x="12" y="12" width="9.5" height="2.4" fill="#3f6fb0"/><path d="M15.2 14.5V21.5M18.4 14.5V21.5M12 17H21.5M12 19.2H21.5" stroke="#b5c7e3" stroke-width="0.7"/></svg>
<svg class="abs" style="left:1231px;top:84.9px" width="22" height="22" viewBox="0 0 22 22" ><rect x="0.6" y="0.6" width="18" height="18" fill="#fff" stroke="#8a8a8a" stroke-width="1.1"/><rect x="3" y="3" width="13.2" height="13" fill="#eef2f8" stroke="#8a8a8a" stroke-width="0.6"/><rect x="3" y="3" width="13.2" height="2.6" fill="#3f6fb0"/><path d="M5 7V15M7 7V15M9 7V15M11 7V15M13 7V15M4 9H15M4 11.5H15M4 13.5H15" stroke="#c5d3e8" stroke-width="0.8"/><rect x="9.5" y="13.5" width="5.6" height="8" fill="#fff" stroke="#777" stroke-width="0.8"/><rect x="9.5" y="13.5" width="5.6" height="2.2" fill="#3f6fb0"/><rect x="16.4" y="12" width="5.4" height="9.5" fill="#fff" stroke="#777" stroke-width="0.8"/><rect x="16.4" y="12" width="5.4" height="2.2" fill="#3f6fb0"/><path d="M17.5 16H20.8M17.5 18H20.8M10.6 17.5H14M10.6 19.3H14" stroke="#9fb4d6" stroke-width="0.7"/></svg>
<svg class="abs" style="left:1231px;top:135.2px" width="22" height="22" viewBox="0 0 22 22" ><rect x="0.6" y="0.6" width="18" height="18" fill="#fff" stroke="#8a8a8a" stroke-width="1.1"/><rect x="3" y="3" width="13.2" height="13" fill="#eef2f8" stroke="#8a8a8a" stroke-width="0.6"/><rect x="3" y="3" width="13.2" height="2.6" fill="#3f6fb0"/><path d="M5 7V15M7 7V15M9 7V15M11 7V15M13 7V15M4 9H15M4 11.5H15M4 13.5H15" stroke="#c5d3e8" stroke-width="0.8"/><rect x="12" y="12" width="9.5" height="9.5" fill="#fff" stroke="#666" stroke-width="0.9"/><rect x="12" y="12" width="9.5" height="2.6" fill="#3f6fb0"/></svg>
<svg class="abs" style="left:1231px;top:189.8px" width="22" height="22" viewBox="0 0 22 22" ><rect x="0.6" y="0.6" width="18" height="18" fill="#fff" stroke="#8a8a8a" stroke-width="1.1"/><rect x="3" y="3" width="13.2" height="13" fill="#eef2f8" stroke="#8a8a8a" stroke-width="0.6"/><rect x="3" y="3" width="13.2" height="2.6" fill="#3f6fb0"/><path d="M5 7V15M7 7V15M9 7V15M11 7V15M13 7V15M4 9H15M4 11.5H15M4 13.5H15" stroke="#c5d3e8" stroke-width="0.8"/><rect x="10.5" y="8" width="9.5" height="13" fill="#fff" stroke="#999" stroke-width="0.6"/><text x="11.2" y="13.6" font-family="Liberation Sans, sans-serif" font-size="6" font-weight="bold" fill="#3f7fd0">A</text><text x="11.4" y="20" font-family="Liberation Sans, sans-serif" font-size="6" font-weight="bold" fill="#9a4fc0">Z</text><path d="M18 9V19.5M16.6 17.8L18 20L19.4 17.8" stroke="#444" stroke-width="0.8" fill="none"/></svg>
<svg class="abs" style="left:1231px;top:240px" width="22" height="22" viewBox="0 0 22 22" ><rect x="0.6" y="0.6" width="18" height="18" fill="#fff" stroke="#8a8a8a" stroke-width="1.1"/><rect x="3" y="3" width="13.2" height="13" fill="#eef2f8" stroke="#8a8a8a" stroke-width="0.6"/><rect x="3" y="3" width="13.2" height="2.6" fill="#3f6fb0"/><path d="M5 7V15M7 7V15M9 7V15M11 7V15M13 7V15M4 9H15M4 11.5H15M4 13.5H15" stroke="#c5d3e8" stroke-width="0.8"/><path d="M11.5 10.5H22L18.2 15V21L15.3 19V15Z" fill="#3f9b6d"/></svg>
<div class="t" style="left:1241.7px;top:67px;transform:translate(-50%,-50%);font-size:8.1px;color:#444">Fonte de dados</div>
<div class="t" style="left:1241.5px;top:117px;transform:translate(-50%,-50%);font-size:8.1px;color:#444">Relação de Dados</div>
<div class="t" style="left:1241.5px;top:167.3px;transform:translate(-50%,-50%);font-size:8.1px;color:#444">Componente</div>
<div class="t" style="left:1241.5px;top:176.2px;transform:translate(-50%,-50%);font-size:8.1px;color:#444">Mestre</div>
<div class="t" style="left:1241.5px;top:221.8px;transform:translate(-50%,-50%);font-size:8.1px;color:#444">Ordem</div>
<div class="t" style="left:1241.5px;top:271.3px;transform:translate(-50%,-50%);font-size:8.1px;color:#444">Filtros</div>
<div class="abs" style="left:1211px;top:52px;width:6px;height:6px;background:#5d9b78;border-radius:50%"></div>
<div class="abs" style="left:1210.2px;top:205.5px;width:7.6px;height:7.6px;background:#fff;border:1.6px solid #5d9b78;border-radius:50%"></div>
<div class="abs" style="left:807px;top:346.8px;width:474px;height:1px;background:#e4e4e4"></div>
<div class="abs" style="left:1155.4px;top:352.6px;width:57px;height:17px;background:#fff;border:1px solid #b8b8b8"></div>
<div class="t" style="left:1184px;top:361.3px;transform:translate(-50%,-50%);font-size:8.6px;color:#444">OK</div>
<div class="abs" style="left:1218px;top:352.6px;width:58px;height:17px;background:#fff;border:1px solid #b8b8b8"></div>
<div class="t" style="left:1247px;top:361.3px;transform:translate(-50%,-50%);font-size:8.6px;color:#444">Cancelar</div>
<svg class="abs" style="left:0;top:0;pointer-events:none" width="1297" height="676" viewBox="0 0 1297 676">
<g stroke="#f00" stroke-width="2.1" fill="#f00" stroke-linecap="round">
<path d="M1098 136.5L1062.5 89.5" fill="none"/><path d="M1057.5 83.5L1068 90.4L1060.4 96.2Z" stroke="none"/>
<path d="M1177.5 267.3L1208.5 228.8" fill="none"/><path d="M1212.6 223.6L1210.8 236L1203.4 230Z" stroke="none"/>
<path d="M806 467.5L759.5 429" fill="none"/><path d="M754.2 424.8L766.8 428L761 435.2Z" stroke="none"/>
</g>
<path d="M806 425H945.4V399" fill="none" stroke="#f00" stroke-width="2.4"/><path d="M945.4 391.8L949.4 401H941.4Z" fill="#f00"/>
</svg>
</body>
</html>
